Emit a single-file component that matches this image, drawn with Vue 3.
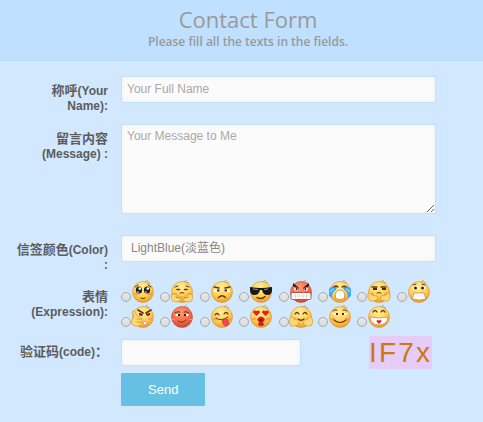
<script setup>
import { ref } from 'vue'

const name = ref('')
const message = ref('')
const color = ref('LightBlue')
const expression = ref('')
const code = ref('')
const captcha = ['I', 'F', '7', 'x']

const line = 'fill="none" stroke="#6b3208" stroke-linecap="round"'
const hand = 'fill="#ffd873" stroke="#d98a25" stroke-width=".6"'
const blush = '<g fill="#f78a55" opacity=".65"><ellipse cx="5" cy="14" rx="2.2" ry="1.3"/><ellipse cx="19" cy="14" rx="2.2" ry="1.3"/></g>'

const faces = [
  { id: 'pleading', art: `${blush}<path ${line} d="M4 7l3-2M20 7l-3-2"/><ellipse cx="8" cy="10" rx="3.1" ry="3.6" fill="#24201f"/><ellipse cx="16" cy="10" rx="3.1" ry="3.6" fill="#24201f"/><g fill="#fff"><circle cx="8.8" cy="8.6" r="1.3"/><circle cx="16.8" cy="8.6" r="1.3"/><circle cx="7" cy="12" r=".8"/><circle cx="15" cy="12" r=".8"/></g><path ${line} d="M10 18q2 1.4 4 0"/>` },
  { id: 'shy', art: `${blush}<path ${line} d="M5 7l3-1M16 6l3 1"/><path ${line} stroke-width="1.6" d="M7 9.5h2.5M14.5 9.5h2.5"/><path ${line} d="M10 13q2-1 4 0"/><path ${hand} d="M1.5 15q3-2 5 0l5 2-1 4q-5 2-8 0q-2-3-1-6zM22.5 15q-3-2-5 0l-5 2 1 4q5 2 8 0q2-3 1-6z"/><path ${line} stroke-width=".6" d="M6 17l4 1M18 17l-4 1"/>` },
  { id: 'displeased', art: `<path ${line} stroke-width="1.4" d="M4 7l5 1M20 7l-5 1"/><path d="M4 9.5h6v2.5H4zM14 9.5h6v2.5h-6z" fill="#fff"/><path d="M7 9.5h2.5v2H7zM14.5 9.5H17v2h-2.5z" fill="#3b2416"/><path ${line} stroke-width="1.3" d="M8.5 17.5q3.5-3.5 7 0"/>` },
  { id: 'cool', art: `<path d="M1 7q6 1 11 1t11-1v3q0 5-4.5 5T13 10h-2q-1 5-5.5 5T1 10z" fill="#191919"/><path d="M4 9l5 .5M15 9.5l4-.5" stroke="#8190a3"/><path ${line} stroke-width="1.4" d="M8 17.5q5 2.5 8-1"/>` },
  { id: 'furious', red: true, art: `<path d="M4 3l6 5-1 1-5-3zM20 3l-6 5 1 1 5-3z" fill="#331311"/><ellipse cx="7" cy="9" rx="2" ry="1.5" fill="#fff"/><ellipse cx="17" cy="9" rx="2" ry="1.5" fill="#fff"/><circle cx="7.6" cy="9" r="1" fill="#331311"/><circle cx="16.4" cy="9" r="1" fill="#331311"/><rect x="2" y="12.5" width="20" height="7" rx="1.5" fill="#fff" stroke="#9d382b" stroke-width=".8"/><path d="M2.5 16h19M6.5 12.5v7M10 12.5v7M14 12.5v7M17.5 12.5v7" stroke="#d9b8b0" stroke-width=".5"/>` },
  { id: 'crying', art: `<path d="M1 9q3-4 8-2l-1 3q-4 1-4 8l-3-2zM23 9q-3-4-8-2l1 3q4 1 4 8l3-2z" fill="#42a8ef"/><path ${line} stroke-width="1.2" d="M6 7q2-2 4 0M14 7q2-2 4 0"/><path d="M2 12q2-3 4-3M22 12q-2-3-4-3" fill="none" stroke="#c5ecff"/><path d="M7.5 18.5q-1-8.5 4.5-8.5t4.5 8.5q-4.5 2-9 0z" fill="#fff" stroke="#ce7528" stroke-width=".7"/>` },
  { id: 'bashful', art: `${blush}<path ${line} stroke-width="1.3" d="M5 7h5M14 7h5"/><path d="M6 8h4v2H6zM15 8h4v2h-4z" fill="#4b2911"/><path ${line} d="M10 13q2-1 4 0"/><path ${hand} d="M1 13q3-1 4 2l5 1q2 4-3 5H3q-3-3-2-8zM23 13q-3-1-4 2l-5 1q-2 4 3 5h4q3-3 2-8z"/>` },
  { id: 'scared', art: `<path ${line} d="M6 5l3-1M15 4l3 1"/><ellipse cx="8" cy="8" rx="2.3" ry="2" fill="#fff"/><ellipse cx="16" cy="8" rx="2.3" ry="2" fill="#fff"/><circle cx="8.5" cy="8" r="1.5" fill="#332117"/><circle cx="15.5" cy="8" r="1.5" fill="#332117"/><path d="M7 13h10l2 6q-7 2-14 0z" fill="#fff" stroke="#b96526" stroke-width=".6"/><path d="M6 16h12M9 13v6M12 13v6M15 13v6" stroke="#e4dcdc" stroke-width=".4"/>` },
  { id: 'warning', art: `<path ${line} stroke-width="1.7" d="M7 5l5 3M20 5l-5 3"/><path d="M8 8l4 1-1 2-3-1zM19 8l-4 1 1 2 3-1z" fill="#422416"/><circle cx="14" cy="18" r="1.9" fill="#fff" stroke="#ee857d"/><ellipse cx="19" cy="14" rx="2" ry="1.3" fill="#f99975"/><path ${hand} d="M3 11L1 7q2-3 3 0l2 4q4 0 5 3v3q-2 5-7 4-5-1-3-6z"/><path ${line} stroke-width=".4" d="M6 14h4M6 17h4"/>` },
  { id: 'smug', red: true, art: `<path ${line} d="M5 8q2-2 5-1M14 7q3-1 5 1"/><path d="M5 9h5v2H6zM14 9h5l-1 2h-4z" fill="#fff"/><path d="M8 9h2v2H8zM14 9h2v2h-2z" fill="#331b16"/><path ${line} stroke-width=".9" d="M8 16q4 3 8-1"/><path d="M2 14l3 1M22 14l-3 1" stroke="#ff9b70"/>` },
  { id: 'teasing', art: `${blush}<path ${line} stroke-width="1.3" d="M5 10q2-3 4 0M14 9q2-3 4 0"/><path ${line} d="M6 13q5 4 12-1"/><path d="M12 15q4-3 6 0l1 4q-3 4-6 0z" fill="#f54450" stroke="#bd2731" stroke-width=".5"/>` },
  { id: 'lovestruck', art: `${blush}<path d="M7.5 11L4 7.5Q4 4.5 7.5 6q3.5-1.5 3.5 1.5zM16.5 11L13 7.5q0-3 3.5-1.5Q20 4.5 20 7.5z" fill="#e92020"/><path d="M9 13q3-3 6 0l1 2-2 2 1 3q-3 2-6 0l1-3-2-2z" fill="#d51d20"/><ellipse cx="12" cy="15" rx="1.3" ry="1" fill="#6a1010"/>` },
  { id: 'cheering', art: `${blush}<path ${line} stroke-width="1.3" d="M6 9q2-3 4 0M14 9q2-3 4 0M9 14q3 2.5 6 0"/><path ${hand} d="M1 13q3-3 4 1l4 1q2 5-3 6H2q-3-3-1-8zM23 13q-3-3-4 1l-4 1q-2 5 3 6h4q3-3 1-8z"/>` },
  { id: 'content', art: `${blush}<path ${line} d="M5 6q2-2 4-1M15 5q2-1 4 1"/><path d="M4 8h6v2H6zM14 8h6l-2 2h-4z" fill="#fff"/><path d="M8 8h2v2H8zM14 8h2v2h-2z" fill="#4b2911"/><path ${line} stroke-width="1.1" d="M6 15q6 5 12 0"/>` },
  { id: 'laughing', art: `${blush}<path ${line} stroke-width="1.3" d="M6 7q2-3 4 0M14 7q2-3 4 0"/><path d="M3 12q9 2 18 0-1 8-9 8t-9-8z" fill="#fff" stroke="#d77b36" stroke-width=".7"/><path d="M12 19l-2.5-2.5q0-2.5 2.5-1 2.5-1.5 2.5 1z" fill="#e3202a"/>` },
]
</script>

<template>
  <main class="page">
    <header class="header">
      <h1>Contact Form</h1>
      <p>Please fill all the texts in the fields.</p>
    </header>

    <form class="form" @submit.prevent>
      <div class="row">
        <label class="label" for="name"><span lang="zh">称呼</span>(Your<br />Name):</label>
        <input id="name" v-model="name" class="control" type="text" placeholder="Your Full Name" />
      </div>

      <div class="row row-message">
        <label class="label" for="message"><span lang="zh">留言内容</span> (Message) :</label>
        <textarea id="message" v-model="message" class="control" placeholder="Your Message to Me"></textarea>
      </div>

      <div class="row row-color">
        <label class="label" for="color"><span lang="zh">信签颜色</span>(Color) :</label>
        <select id="color" v-model="color" class="control">
          <option value="LightBlue">LightBlue(淡蓝色)</option>
        </select>
      </div>

      <div class="row row-faces" role="radiogroup" aria-labelledby="expression-label">
        <span id="expression-label" class="label"><span lang="zh">表情</span> (Expression):</span>
        <div class="faces">
          <label v-for="face in faces" :key="face.id" class="face">
            <input v-model="expression" type="radio" name="expression" :value="face.id" :aria-label="face.id" />
            <svg viewBox="0 0 24 24" aria-hidden="true">
              <defs>
                <radialGradient :id="`skin-${face.id}`" cx=".45" cy=".28" r=".75">
                  <stop offset="0" :stop-color="face.red ? '#ff9a70' : '#fff0a0'" />
                  <stop offset=".6" :stop-color="face.red ? '#f4694a' : '#ffcf50'" />
                  <stop offset="1" :stop-color="face.red ? '#c8402c' : '#ea9424'" />
                </radialGradient>
              </defs>
              <path d="M14 2q1-2 3-1M16 3q2-1 3 0" fill="none" stroke="#c98a3c" stroke-width=".8" />
              <circle cx="12" cy="12" r="10.5" :fill="`url(#skin-${face.id})`" :stroke="face.red ? '#bd4932' : '#d99035'" stroke-width=".6" />
              <g v-html="face.art"></g>
            </svg>
          </label>
        </div>
      </div>

      <div class="row row-code">
        <label class="label" for="code"><span lang="zh">验证码</span>(code)<span lang="zh">：</span></label>
        <div class="code">
          <input id="code" v-model="code" class="control" type="text" />
          <div class="captcha"><span v-for="c in captcha" :key="c">{{ c }}</span></div>
        </div>
      </div>

      <button class="send" type="submit">Send</button>
    </form>
  </main>
</template>

<style>
body {
  margin: 0;
  background: #d2e8ff;
}
</style>

<style scoped>
.page {
  font-family: "Liberation Sans", "Noto Sans CJK SC", sans-serif;
  font-size: 12px;
  line-height: 15px;
  color: #5c5c5c;
}

.header {
  padding: 5px 0 9px 13px;
  border-bottom: 1px solid #b4dcff;
  background: #bfe0ff;
  color: #999;
  font-family: "Trebuchet MS", "Open Sans", sans-serif;
  text-align: center;
}

h1 {
  margin: 0;
  font-size: 22px;
  font-weight: 400;
  line-height: 28px;
}

.header p {
  margin: 0;
  font-size: 12px;
  font-weight: 600;
  line-height: 18px;
}

.form {
  padding: 15px 47px 16px 13px;
}

.row {
  display: flex;
  align-items: flex-start;
  gap: 13px;
}

.row-message {
  margin-top: 10px;
}

.row-color {
  margin-top: 21px;
}

.row-faces {
  margin-top: 6px;
}

.row-code {
  align-items: center;
  margin-top: 6px;
}

.label {
  flex: 0 0 95px;
  padding-top: 8px;
  font-weight: 700;
  text-align: right;
}

.label span {
  font-size: 13px;
  line-height: 12px;
}

.row-faces .label {
  padding-top: 11px;
}

.row-code .label {
  padding-top: 0;
}

.control {
  flex: 1;
  box-sizing: border-box;
  min-width: 0;
  height: 27px;
  margin: 0;
  padding: 4px 5px 6px;
  border: 1px solid #bfe0ff;
  border-radius: 0;
  outline: none;
  background: #fbfbfb;
  box-shadow: inset 0 0 5px #f0f0ee;
  color: #888;
  font: inherit;
}

.control::placeholder {
  color: #a9a9a9;
  opacity: 1;
}

textarea.control {
  height: 90px;
  resize: vertical;
}

select.control {
  appearance: none;
  padding: 5px 9px;
}

.faces {
  flex: 1;
  display: grid;
  grid-template-columns: repeat(8, 1fr);
  grid-auto-rows: 25px;
  padding-top: 1px;
}

.face {
  display: flex;
  align-items: flex-start;
}

.face input {
  appearance: none;
  flex: none;
  width: 10px;
  height: 10px;
  margin: 12px 0 0;
  border: 1px solid #a5a9ad;
  border-radius: 50%;
  background: linear-gradient(#e9e9e9, #dadada);
}

.face input:checked {
  background: radial-gradient(#555 30%, #e2e2e2 40%);
}

.face svg {
  flex: none;
  width: 24px;
  height: 24px;
}

.code {
  flex: 1;
  display: flex;
  align-items: center;
  justify-content: space-between;
  padding-right: 4px;
}

.code .control {
  flex: 0 1 180px;
}

.captcha {
  display: flex;
  justify-content: space-between;
  box-sizing: border-box;
  width: 63px;
  padding: 0 2px 0 0;
  background: #e6ccf7;
  color: #cb7a0c;
  font-size: 28px;
  line-height: 33px;
}

.send {
  display: block;
  margin: 4px 0 0 108px;
  padding: 9px 27px;
  border: 0;
  border-radius: 1px;
  background: #66c0e4;
  color: #fff;
  font: inherit;
  font-size: 13px;
}
</style>
